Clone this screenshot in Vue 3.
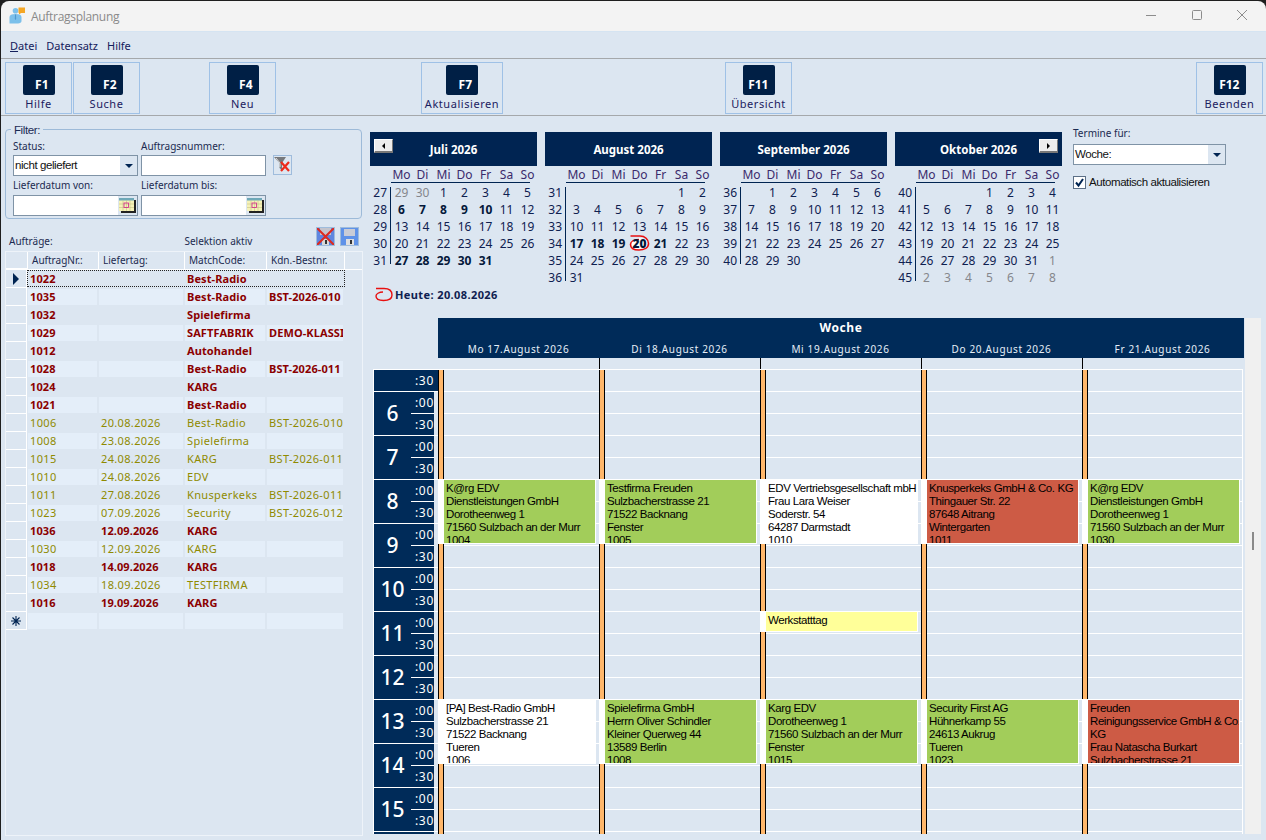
<script setup>
const toolbar = [
    { key: 'F1', label: 'Hilfe', cls: 'b1' },
    { key: 'F2', label: 'Suche', cls: 'b2' },
    { key: 'F4', label: 'Neu', cls: 'b4' },
    { key: 'F7', label: 'Aktualisieren', cls: 'b7' },
    { key: 'F11', label: 'Übersicht', cls: 'b11' },
    { key: 'F12', label: 'Beenden', cls: 'b12' },
];

const orders = [
    ['1022', '', 'Best-Radio', '', 1],
    ['1035', '', 'Best-Radio', 'BST-2026-010', 1],
    ['1032', '', 'Spielefirma', '', 1],
    ['1029', '', 'SAFTFABRIK', 'DEMO-KLASSI', 1],
    ['1012', '', 'Autohandel', '', 1],
    ['1028', '', 'Best-Radio', 'BST-2026-011', 1],
    ['1024', '', 'KARG', '', 1],
    ['1021', '', 'Best-Radio', '', 1],
    ['1006', '20.08.2026', 'Best-Radio', 'BST-2026-010', 0],
    ['1008', '23.08.2026', 'Spielefirma', '', 0],
    ['1015', '24.08.2026', 'KARG', 'BST-2026-011', 0],
    ['1010', '24.08.2026', 'EDV', '', 0],
    ['1011', '27.08.2026', 'Knusperkeks', 'BST-2026-011', 0],
    ['1023', '07.09.2026', 'Security', 'BST-2026-012', 0],
    ['1036', '12.09.2026', 'KARG', '', 1],
    ['1030', '12.09.2026', 'KARG', '', 0],
    ['1018', '14.09.2026', 'KARG', '', 1],
    ['1034', '18.09.2026', 'TESTFIRMA', '', 0],
    ['1016', '19.09.2026', 'KARG', '', 1],
];

const weekdays = ['Mo', 'Di', 'Mi', 'Do', 'Fr', 'Sa', 'So'];

// negative = day of another month (grey), 0 = empty
const months = [
    {
        name: 'Juli 2026', prev: true, bold: [6, 7, 8, 9, 10, 27, 28, 29, 30, 31],
        weeks: [
            [27, -29, -30, 1, 2, 3, 4, 5],
            [28, 6, 7, 8, 9, 10, 11, 12],
            [29, 13, 14, 15, 16, 17, 18, 19],
            [30, 20, 21, 22, 23, 24, 25, 26],
            [31, 27, 28, 29, 30, 31, 0, 0],
        ],
    },
    {
        name: 'August 2026', bold: [17, 18, 19, 20, 21], today: 20,
        weeks: [
            [31, 0, 0, 0, 0, 0, 1, 2],
            [32, 3, 4, 5, 6, 7, 8, 9],
            [33, 10, 11, 12, 13, 14, 15, 16],
            [34, 17, 18, 19, 20, 21, 22, 23],
            [35, 24, 25, 26, 27, 28, 29, 30],
            [36, 31, 0, 0, 0, 0, 0, 0],
        ],
    },
    {
        name: 'September 2026', bold: [],
        weeks: [
            [36, 0, 1, 2, 3, 4, 5, 6],
            [37, 7, 8, 9, 10, 11, 12, 13],
            [38, 14, 15, 16, 17, 18, 19, 20],
            [39, 21, 22, 23, 24, 25, 26, 27],
            [40, 28, 29, 30, 0, 0, 0, 0],
        ],
    },
    {
        name: 'Oktober 2026', next: true, bold: [],
        weeks: [
            [40, 0, 0, 0, 1, 2, 3, 4],
            [41, 5, 6, 7, 8, 9, 10, 11],
            [42, 12, 13, 14, 15, 16, 17, 18],
            [43, 19, 20, 21, 22, 23, 24, 25],
            [44, 26, 27, 28, 29, 30, 31, -1],
            [45, -2, -3, -4, -5, -6, -7, -8],
        ],
    },
];

const hours = [6, 7, 8, 9, 10, 11, 12, 13, 14, 15];
const slots = 22;
const slotHeight = 22;

const k = (slot, color, lines, span = 3) => ({ slot, color, lines, span });
const days = [
    {
        label: 'Mo 17.August 2026',
        events: [
            k(5, 'green', ['K@rg EDV', 'Dienstleistungen GmbH', 'Dorotheenweg 1', '71560 Sulzbach an der Murr', '1004']),
            k(15, 'white', ['[PA] Best-Radio GmbH', 'Sulzbacherstrasse 21', '71522 Backnang', 'Tueren', '1006']),
        ],
    },
    {
        label: 'Di 18.August 2026',
        events: [
            k(5, 'green', ['Testfirma Freuden', 'Sulzbacherstrasse 21', '71522 Backnang', 'Fenster', '1005']),
            k(15, 'green', ['Spielefirma GmbH', 'Herrn Oliver Schindler', 'Kleiner Querweg 44', '13589 Berlin', '1008']),
        ],
    },
    {
        label: 'Mi 19.August 2026',
        events: [
            k(5, 'white', ['EDV Vertriebsgesellschaft mbH', 'Frau Lara Weiser', 'Soderstr. 54', '64287 Darmstadt', '1010']),
            k(11, 'yellow', ['Werkstatttag'], 1),
            k(15, 'green', ['Karg EDV', 'Dorotheenweg 1', '71560 Sulzbach an der Murr', 'Fenster', '1015']),
        ],
    },
    {
        label: 'Do 20.August 2026',
        events: [
            k(5, 'red', ['Knusperkeks GmbH & Co. KG', 'Thingauer Str. 22', '87648 Aitrang', 'Wintergarten', '1011']),
            k(15, 'green', ['Security First AG', 'Hühnerkamp 55', '24613 Aukrug', 'Tueren', '1023']),
        ],
    },
    {
        label: 'Fr 21.August 2026',
        events: [
            k(5, 'green', ['K@rg EDV', 'Dienstleistungen GmbH', 'Dorotheenweg 1', '71560 Sulzbach an der Murr', '1030']),
            k(15, 'red', ['Freuden', 'Reinigungsservice GmbH & Co.', 'KG', 'Frau Natascha Burkart', 'Sulzbacherstrasse 21']),
        ],
    },
];
</script>

<template>
    <div class="window">
        <!-- TITLE BAR -->
        <div class="titlebar">
            <svg class="app-icon" width="18" height="18" viewBox="0 0 18 18">
                <circle cx="6.5" cy="3.8" r="2.8" fill="#7cc0ea" />
                <path d="M0.5 16.5 V10 C0.5 8 2.5 7 6.5 7 C10.5 7 12.5 8 12.5 10 V14 C12.5 15.5 11 16.5 9 16.5 Z" fill="#7cc0ea" />
                <path d="M6 7.5 H7 L7.2 12 L6.5 13 L5.8 12 Z" fill="#4f98d0" />
                <rect x="9.5" y="0.5" width="6.5" height="5.5" fill="#f5a623" />
                <path d="M10 6 L10 7.5 L12 6 Z" fill="#f5a623" />
            </svg>
            <span class="title">Auftragsplanung</span>
            <div class="win-controls">
                <svg width="10" height="10" viewBox="0 0 10 10"><path d="M0 5.5 H10" stroke="#8c8c8c" /></svg>
                <svg width="10" height="10" viewBox="0 0 10 10"><rect x="0.5" y="0.5" width="9" height="9" rx="1" fill="none" stroke="#8c8c8c" /></svg>
                <svg width="10" height="10" viewBox="0 0 10 10"><path d="M0 0 L10 10 M10 0 L0 10" stroke="#8c8c8c" /></svg>
            </div>
        </div>

        <!-- MENU -->
        <div class="menubar">
            <span><u>D</u>atei</span>
            <span>Datensatz</span>
            <span>Hilfe</span>
        </div>

        <!-- TOOLBAR -->
        <div class="toolbar">
            <button v-for="b in toolbar" :key="b.key" class="tool-btn" :class="b.cls">
                <span class="fkey">{{ b.key }}</span>
                <span class="tool-label">{{ b.label }}</span>
            </button>
        </div>

        <div class="main">
            <!-- LEFT PANE -->
            <div class="left">
                <div class="filter">
                    <span class="legend">Filter:</span>
                    <div class="filter-grid">
                        <label class="lbl">Status:</label>
                        <label class="lbl">Auftragsnummer:</label>
                        <span></span>
                        <div class="input combo">
                            <span class="combo-text">nicht geliefert</span>
                            <span class="drop"><i class="arrow"></i></span>
                        </div>
                        <div class="input"></div>
                        <span class="icon-btn filter-off">
                            <svg width="17" height="18" viewBox="0 0 17 18">
                                <path d="M0 1 H12 L8 7 V14 L5.5 12 V7 Z" fill="#77797c" />
                                <path d="M2 2 L6 7 V11" stroke="#dcdcdc" fill="none" />
                                <path d="M7 6 L15 15 M15 6 L7 15" stroke="#ee2a1a" stroke-width="2.2" />
                            </svg>
                        </span>
                        <label class="lbl lbl2">Lieferdatum von:</label>
                        <label class="lbl lbl2">Lieferdatum bis:</label>
                        <span></span>
                        <div class="input combo">
                            <span class="combo-text"></span>
                            <span class="drop date">
                                <svg width="17" height="15" viewBox="0 0 17 15">
                                    <rect x="2" y="2" width="15" height="13" fill="#222" />
                                    <rect x="0" y="0" width="15" height="13" fill="#f6f2b8" />
                                    <rect x="0" y="0" width="15" height="2.5" fill="#6fa8b8" />
                                    <path d="M0 6 H15 M0 9.5 H15 M4 2.5 V13 M7.5 2.5 V13 M11 2.5 V13" stroke="#bdb67a" stroke-width="0.5" />
                                    <rect x="5" y="5" width="4.5" height="4.5" fill="none" stroke="#d0208c" stroke-width="0.8" />
                                </svg>
                            </span>
                        </div>
                        <div class="input combo">
                            <span class="combo-text"></span>
                            <span class="drop date">
                                <svg width="17" height="15" viewBox="0 0 17 15">
                                    <rect x="2" y="2" width="15" height="13" fill="#222" />
                                    <rect x="0" y="0" width="15" height="13" fill="#f6f2b8" />
                                    <rect x="0" y="0" width="15" height="2.5" fill="#6fa8b8" />
                                    <path d="M0 6 H15 M0 9.5 H15 M4 2.5 V13 M7.5 2.5 V13 M11 2.5 V13" stroke="#bdb67a" stroke-width="0.5" />
                                    <rect x="5" y="5" width="4.5" height="4.5" fill="none" stroke="#d0208c" stroke-width="0.8" />
                                </svg>
                            </span>
                        </div>
                        <span></span>
                    </div>
                </div>

                <div class="list-head">
                    <span class="lbl list-title">Aufträge:</span>
                    <span class="lbl list-sel">Selektion aktiv</span>
                    <span class="icon-btn disk">
                        <svg width="17" height="17" viewBox="0 0 17 17">
                            <path d="M0 0 H17 V17 H0 Z" fill="#5f86e0" />
                            <rect x="3" y="0" width="11" height="7" fill="#c4c4cc" />
                            <rect x="5" y="11" width="7" height="6" fill="#d8d8d8" />
                            <rect x="8" y="12" width="2" height="4" fill="#333" />
                            <path d="M0 0 L17 17 M17 0 L0 17" stroke="#dd2a20" stroke-width="2" />
                        </svg>
                    </span>
                    <span class="icon-btn disk">
                        <svg width="17" height="17" viewBox="0 0 17 17">
                            <path d="M0 0 H17 V17 H0 Z" fill="#5f92e8" />
                            <rect x="3" y="1" width="11" height="7" fill="#c9ccd6" />
                            <rect x="5" y="11" width="8" height="6" fill="#e0e0e0" />
                            <rect x="9" y="12" width="2" height="4" fill="#333" />
                        </svg>
                    </span>
                </div>

                <div class="orders">
                    <div class="o-row o-header">
                        <span class="rowhead"></span>
                        <span>AuftragNr.:</span>
                        <span>Liefertag:</span>
                        <span>MatchCode:</span>
                        <span>Kdn.-Bestnr.</span>
                    </div>
                    <div
                        v-for="(o, i) in orders"
                        :key="o[0]"
                        class="o-row"
                        :class="{ alt: i % 2 === 1, late: o[4], current: i === 0 }"
                    >
                        <span class="rowhead">
                            <i v-if="i === 0" class="pointer"></i>
                        </span>
                        <span class="cell">{{ o[0] }}</span>
                        <span class="cell">{{ o[1] }}</span>
                        <span class="cell">{{ o[2] }}</span>
                        <span class="cell">{{ o[3] }}</span>
                    </div>
                    <div class="o-row alt">
                        <span class="rowhead">
                            <svg width="10" height="10" viewBox="0 0 10 10">
                                <path d="M5 0 V10 M0 5 H10 M1.5 1.5 L8.5 8.5 M8.5 1.5 L1.5 8.5" stroke="#002452" stroke-width="1.1" />
                            </svg>
                        </span>
                        <span class="cell"></span>
                        <span class="cell"></span>
                        <span class="cell"></span>
                        <span class="cell"></span>
                    </div>
                </div>
            </div>

            <!-- RIGHT PANE -->
            <div class="right">
                <div class="top-row">
                    <div v-for="m in months" :key="m.name" class="month">
                        <div class="month-head">
                            <span v-if="m.prev" class="nav prev"><i class="tri-left"></i></span>
                            {{ m.name }}
                            <span v-if="m.next" class="nav next"><i class="tri-right"></i></span>
                        </div>
                        <div class="wd-row">
                            <span v-for="w in weekdays" :key="w">{{ w }}</span>
                        </div>
                        <div class="weeks">
                            <div v-for="w in m.weeks" :key="w[0]" class="week">
                                <span class="wk-no">{{ w[0] }}</span>
                                <span
                                    v-for="(d, j) in w.slice(1)"
                                    :key="j"
                                    class="day"
                                    :class="{ grey: d < 0, bold: m.bold.includes(d), today: d === m.today }"
                                >
                                    <svg v-if="d === m.today" class="today-ring" width="21" height="18" viewBox="0 0 21 18">
                                        <ellipse cx="10.5" cy="10" rx="9" ry="6" fill="#fff" />
                                        <path d="M1.5 2 H11 C16 2 19.5 5.5 19.5 9.5 C19.5 14 15 16 10 16 C4.5 16 1.5 14 1.5 10.5 C1.5 7.5 5 5.5 10 5.5" fill="none" stroke="#e81010" stroke-width="1.6" />
                                    </svg>
                                    <b v-if="d === m.today">{{ d }}</b>
                                    <template v-else>{{ d > 0 ? d : d < 0 ? -d : '' }}</template>
                                </span>
                            </div>
                        </div>
                    </div>

                    <div class="termine">
                        <label class="lbl termine-lbl">Termine für:</label>
                        <div class="input combo termine-combo">
                            <span class="combo-text">Woche:</span>
                            <span class="drop"><i class="arrow"></i></span>
                        </div>
                        <div class="check-row">
                            <span class="check">
                                <svg width="11" height="11" viewBox="0 0 11 11">
                                    <path d="M2 5.5 L4.5 8.5 L9 2" fill="none" stroke="#002452" stroke-width="2" />
                                </svg>
                            </span>
                            <span class="combo-text">Automatisch aktualisieren</span>
                        </div>
                    </div>
                </div>

                <div class="heute">
                    <svg width="18" height="15" viewBox="0 0 18 15">
                        <path d="M1 1.5 H9 C14 1.5 17 4 17 8 C17 12 13 13.5 8.5 13.5 C3.5 13.5 1 12 1 9 C1 7 4 5 8 5" fill="none" stroke="#e81010" stroke-width="1.4" />
                    </svg>
                    <span>Heute: 20.08.2026</span>
                </div>

                <!-- SCHEDULER -->
                <div class="sched">
                    <div class="sched-main">
                        <div class="sched-head">
                            <div class="sched-title">Woche</div>
                            <div class="sched-days">
                                <span v-for="d in days" :key="d.label">{{ d.label }}</span>
                            </div>
                        </div>
                        <div class="strip">
                            <span v-for="d in days" :key="d.label"></span>
                        </div>
                        <div class="sched-body">
                            <div class="times">
                                <div class="half-first"><span class="t">:30</span></div>
                                <div v-for="h in hours" :key="h" class="hour-row">
                                    <div class="hour-inner">
                                        <span class="hour-no">{{ h }}</span>
                                        <div class="mins">
                                            <span class="t m00">:00</span>
                                            <span class="t">:30</span>
                                        </div>
                                    </div>
                                </div>
                                <!-- next hour just peeks in at the bottom edge -->
                                <div class="hour-row"><div class="hour-inner"></div></div>
                            </div>
                            <div v-for="d in days" :key="d.label" class="day-col">
                                <div v-for="n in slots" :key="n" class="slot"></div>
                                <i class="bar"></i>
                                <div
                                    v-for="e in d.events"
                                    :key="e.slot"
                                    class="event"
                                    :class="e.color"
                                    :style="{
                                        top: e.slot * slotHeight + 'px',
                                        height: e.span * slotHeight - 1 + 'px',
                                    }"
                                >
                                    <div v-for="(l, i) in e.lines" :key="i" class="ev-line">{{ l }}</div>
                                </div>
                            </div>
                        </div>
                    </div>
                    <div class="scrollbar"><i class="thumb"></i></div>
                </div>
            </div>
        </div>
    </div>
</template>

<style>
html,
body {
    margin: 0;
    background: #1e1e1e;
}
</style>

<style scoped>
.window {
    width: 1266px;
    height: 840px;
    box-sizing: border-box;
    padding: 1px 0 0 1px;
    background: #1e1e1e;
    display: flex;
    flex-direction: column;
    overflow: hidden;
    font-family: "Noto Sans", sans-serif;
    font-size: 11px;
    color: #1b2a6b;
}

.titlebar {
    height: 30px;
    flex: none;
    display: flex;
    align-items: center;
    padding-left: 8px;
    background: #f3f3f3;
    border-radius: 8px 8px 0 0;
    border-bottom: 1px solid #d5e4f2;
}

.app-icon {
    margin-right: 4px;
    margin-top: -1px;
}

.title {
    font-family: "Open Sans", sans-serif;
    font-size: 12px;
    letter-spacing: -0.3px;
    color: #8a8a8a;
}

.win-controls {
    margin-left: auto;
    margin-right: 19px;
    margin-bottom: 2px;
    display: flex;
    gap: 35.5px;
}

.menubar {
    height: 27px;
    flex: none;
    box-sizing: border-box;
    display: flex;
    align-items: center;
    gap: 9px;
    padding-left: 9px;
    background: #dce6f1;
    border-bottom: 1px solid #a5a8ab;
    font-size: 11px;
    color: #14205c;
}

.toolbar {
    height: 57px;
    flex: none;
    box-sizing: border-box;
    display: flex;
    align-items: flex-start;
    padding: 3px 0 0 4px;
    background: #dce6f1;
    border-bottom: 1px solid #a5a8ab;
}

.tool-btn {
    width: 67px;
    height: 52px;
    box-sizing: border-box;
    padding: 2px 0 0;
    margin: 0;
    display: flex;
    flex-direction: column;
    align-items: center;
    background: transparent;
    border: 1px solid #9fc1e6;
    font-family: inherit;
}

.b2 { margin-left: 1px; }
.b4 { margin-left: 69px; }
.b7 { margin-left: 145px; width: 82px; }
.b11 { margin-left: 222px; }
.b12 { margin-left: 404px; }

.fkey {
    width: 32px;
    height: 30px;
    box-sizing: border-box;
    padding: 0 6px 5px 0;
    display: flex;
    align-items: flex-end;
    justify-content: flex-end;
    background: #001f45;
    border-radius: 2px;
    color: #fff;
    font-size: 12px;
    font-weight: 700;
    line-height: 10px;
}

.tool-label {
    margin-top: 1px;
    font-size: 11px;
    line-height: 15px;
    letter-spacing: 0.55px;
    color: #1b2060;
    white-space: nowrap;
}

.main {
    flex: 1;
    display: flex;
    min-height: 0;
    background: #dce6f1;
}

/* left pane */
.left {
    width: 369px;
    flex: none;
    box-sizing: border-box;
    padding: 13px 0 0 4px;
}

.filter {
    position: relative;
    width: 357px;
    height: 90px;
    box-sizing: border-box;
    padding: 9px 0 0 7px;
    border: 1px solid #9dbad8;
    border-radius: 4px;
}

.legend {
    position: absolute;
    top: -7px;
    left: 5px;
    padding: 0 3px;
    background: #dce6f1;
    font-family: "Liberation Sans", sans-serif;
    font-size: 11.5px;
    letter-spacing: -0.4px;
    line-height: 14px;
    color: #1a2a55;
}

.filter-grid {
    display: grid;
    grid-template-columns: 125px 125px 26px;
    grid-template-rows: 16px 21px 19px 21px;
    column-gap: 3px;
}

.lbl {
    font-size: 10px;
    line-height: 14px;
    color: #1b2a50;
    white-space: nowrap;
}

.lbl2 {
    align-self: end;
    padding-bottom: 3px;
}

.input {
    box-sizing: border-box;
    background: #fff;
    border: 1px solid #7f93a6;
}

.combo {
    display: flex;
    align-items: stretch;
}

.combo-text {
    flex: 1;
    padding-left: 1px;
    font-family: "Liberation Sans", sans-serif;
    font-size: 11.5px;
    letter-spacing: -0.42px;
    line-height: 19px;
    color: #111;
    white-space: nowrap;
}

.drop {
    width: 17px;
    flex: none;
    display: flex;
    align-items: center;
    justify-content: center;
    background: #dce6f1;
}

.drop.date {
    width: 19px;
}

.arrow {
    width: 0;
    height: 0;
    border-left: 4px solid transparent;
    border-right: 4px solid transparent;
    border-top: 4px solid #002452;
}

.icon-btn {
    box-sizing: border-box;
    display: flex;
    align-items: center;
    justify-content: center;
    border: 1px solid #9fbcdc;
}

.filter-off {
    width: 19px;
    height: 20px;
    margin-left: 4px;
}

.list-head {
    height: 32px;
    display: flex;
    align-items: flex-end;
    width: 354px;
    padding: 0 0 5px 4px;
    box-sizing: border-box;
}

.list-title {
    width: 176px;
    margin-bottom: -2px;
}

.list-sel {
    width: 132px;
    margin-bottom: -2px;
}

.disk {
    width: 19px;
    height: 19px;
    margin-left: 5px;
}

.disk:nth-of-type(3) {
    margin-left: 0;
}

.orders {
    width: 358px;
    height: 585px;
    box-sizing: border-box;
    border: 1px solid #eef3f9;
}

.o-row {
    position: relative;
    height: 18px;
    display: grid;
    grid-template-columns: 22px 71px 86px 82px 78px;
    font-size: 11px;
    letter-spacing: 0.35px;
    line-height: 16px;
    color: #8f8a00;
}

.o-row.late {
    color: #8b0000;
    font-weight: 700;
    letter-spacing: 0.1px;
}

.o-header {
    height: 17px;
    color: #1b2a50;
    font-size: 10px;
    letter-spacing: 0;
    border-bottom: 1px solid #fff;
}

.o-header span {
    padding-left: 4px;
    border-right: 1px solid #fff;
    line-height: 17px;
}

.o-header .rowhead {
    padding: 0;
    margin-right: 0;
}

.rowhead {
    display: flex;
    align-items: center;
    justify-content: center;
    margin-right: 1px;
    border-right: 1px solid #fff;
    border-bottom: 1px solid #fff;
}

.pointer {
    width: 0;
    height: 0;
    border-top: 6px solid transparent;
    border-bottom: 6px solid transparent;
    border-left: 6px solid #002452;
}

.cell {
    margin: 1px 2px 1px 0;
    padding-left: 2px;
    overflow: hidden;
    white-space: nowrap;
}

.o-row.alt .cell {
    background: #e4eef9;
}

.o-row.current::after {
    content: "";
    position: absolute;
    left: 21px;
    top: 0;
    width: 318px;
    height: 17px;
    box-sizing: border-box;
    border: 1px dotted #222;
}

/* right pane */
.right {
    flex: 1;
    min-width: 0;
    padding-top: 16px;
}

.top-row {
    height: 155px;
    display: flex;
    gap: 8px;
}

.month {
    width: 167px;
}

.month-head {
    position: relative;
    height: 34px;
    display: flex;
    align-items: center;
    justify-content: center;
    background: #002452;
    color: #fff;
    font-size: 11.5px;
    font-weight: 700;
}

.nav {
    position: absolute;
    top: 7px;
    width: 19px;
    height: 14px;
    display: flex;
    align-items: center;
    justify-content: center;
    background: #ececec;
    border-top: 1px solid #fff;
    border-left: 1px solid #fff;
    border-right: 1px solid #777;
    border-bottom: 2px solid #777;
    box-sizing: border-box;
}

.prev { left: 4px; }
.next { right: 4px; }

.tri-left {
    border-top: 3px solid transparent;
    border-bottom: 3px solid transparent;
    border-right: 3px solid #000;
}

.tri-right {
    border-top: 3px solid transparent;
    border-bottom: 3px solid transparent;
    border-left: 3px solid #000;
}

.wd-row {
    height: 16px;
    margin-left: 21px;
    display: grid;
    grid-template-columns: repeat(7, 21px);
    box-sizing: content-box;
    width: 139px;
    padding-top: 0;
    border-bottom: 1px solid #002452;
    font-size: 12px;
    line-height: 18px;
    text-align: center;
    color: #3a2a6b;
}

.weeks {
    position: relative;
    padding-top: 1px;
}

/* week number rule stops short of the row edges */
.weeks::before {
    content: "";
    position: absolute;
    left: 20px;
    top: 4px;
    bottom: 5px;
    width: 1px;
    background: #002452;
}

.week {
    height: 17px;
    display: grid;
    grid-template-columns: 21px repeat(7, 21px);
    font-size: 12px;
    line-height: 17px;
    text-align: center;
    color: #0e2050;
}

.wk-no {
    text-align: right;
    padding-right: 4px;
}

.day {
    position: relative;
}

.day.grey {
    color: #85868c;
}

.day.bold {
    font-weight: 700;
    color: #04183a;
}

.today-ring {
    position: absolute;
    left: 0;
    top: -1px;
}

.today b {
    position: relative;
    color: #04183a;
}

.termine {
    margin: -6px 0 0 3px;
    width: 153px;
}

.termine-lbl {
    display: block;
}

.termine-combo {
    margin-top: 4px;
    height: 21px;
}

.check-row {
    margin-top: 8px;
    display: flex;
    align-items: center;
    gap: 2px;
}

.check {
    width: 13px;
    height: 13px;
    box-sizing: border-box;
    display: flex;
    align-items: center;
    justify-content: center;
    background: #fff;
    border: 1px solid #5c6f86;
}

.heute {
    height: 15px;
    margin-left: 5px;
    display: flex;
    align-items: center;
    gap: 2px;
    font-size: 11px;
    font-weight: 700;
    letter-spacing: 0.4px;
    color: #0e2050;
}

.sched {
    margin-top: 16px;
    margin-left: 3px;
    display: flex;
    gap: 1px;
}

.sched-main {
    width: 871px;
}

.sched-head {
    margin-left: 65px;
    height: 40px;
    width: 806px;
    background: #002b59;
    color: #fff;
}

.sched-title {
    height: 20px;
    text-align: center;
    font-size: 12px;
    font-weight: 700;
    line-height: 20px;
    letter-spacing: 0.6px;
}

.sched-days {
    display: grid;
    grid-template-columns: repeat(5, 161px);
    text-align: center;
    font-size: 10px;
    letter-spacing: 0.65px;
    line-height: 22px;
    color: #e6eff8;
}

.strip {
    margin-left: 65px;
    height: 11px;
    display: grid;
    grid-template-columns: repeat(5, 161px);
}

.strip span + span {
    border-left: 1px solid #000;
}

.sched-body {
    height: 465px;
    display: flex;
    overflow: hidden;
}

.times {
    width: 65px;
    flex: none;
    box-sizing: border-box;
    border-left: 1px solid #fff;
}

.half-first {
    height: 22px;
    box-sizing: border-box;
    border-top: 1px solid #fff;
    padding-right: 4px;
    background: #002b59;
    text-align: right;
}

.hour-row {
    height: 44px;
    box-sizing: border-box;
    border-top: 1px solid #fff;
    padding-right: 4px;
}

.hour-inner {
    height: 43px;
    display: flex;
    background: #002b59;
    color: #fff;
}

.hour-no {
    width: 37px;
    flex: none;
    text-align: center;
    font-size: 21px;
    font-weight: 500;
    line-height: 42px;
}

.mins {
    flex: 1;
    display: flex;
    flex-direction: column;
}

.t {
    display: block;
    height: 21px;
    color: #fff;
    font-size: 12px;
    line-height: 21px;
    letter-spacing: 0.7px;
    text-align: right;
}

.m00 {
    border-bottom: 1px solid #fff;
}

.day-col {
    position: relative;
    width: 161px;
    flex: none;
}

.slot {
    height: 22px;
    box-sizing: border-box;
    border-top: 1px solid #fff;
}

.day-col:last-child .slot {
    border-right: 1px solid #fff;
}

.bar {
    position: absolute;
    left: 0;
    top: 1px;
    bottom: 0;
    width: 6px;
    box-sizing: border-box;
    background: #ffb76b;
    border-left: 1px solid #000;
    border-right: 1px solid #000;
}

.event {
    position: absolute;
    left: 0;
    width: 158px;
    box-sizing: border-box;
    padding: 2px 0 0 2px;
    overflow: hidden;
    border: 1px solid #fff;
    border-left-width: 6px;
    font-family: "Liberation Sans", sans-serif;
    font-size: 11.5px;
    line-height: 13px;
    color: #000;
}

.event.green { background: #a2cd5a; }
.event.red { background: #cd5b45; }
.event.white { background: #fff; }
.event.yellow { background: #ffff99; }

.ev-line {
    white-space: nowrap;
    letter-spacing: -0.42px;
}

.scrollbar {
    position: relative;
    width: 16px;
    background: #f0f0f0;
}

.thumb {
    position: absolute;
    left: 7px;
    top: 214px;
    width: 2px;
    height: 18px;
    background: #8a8a8a;
}
</style>
